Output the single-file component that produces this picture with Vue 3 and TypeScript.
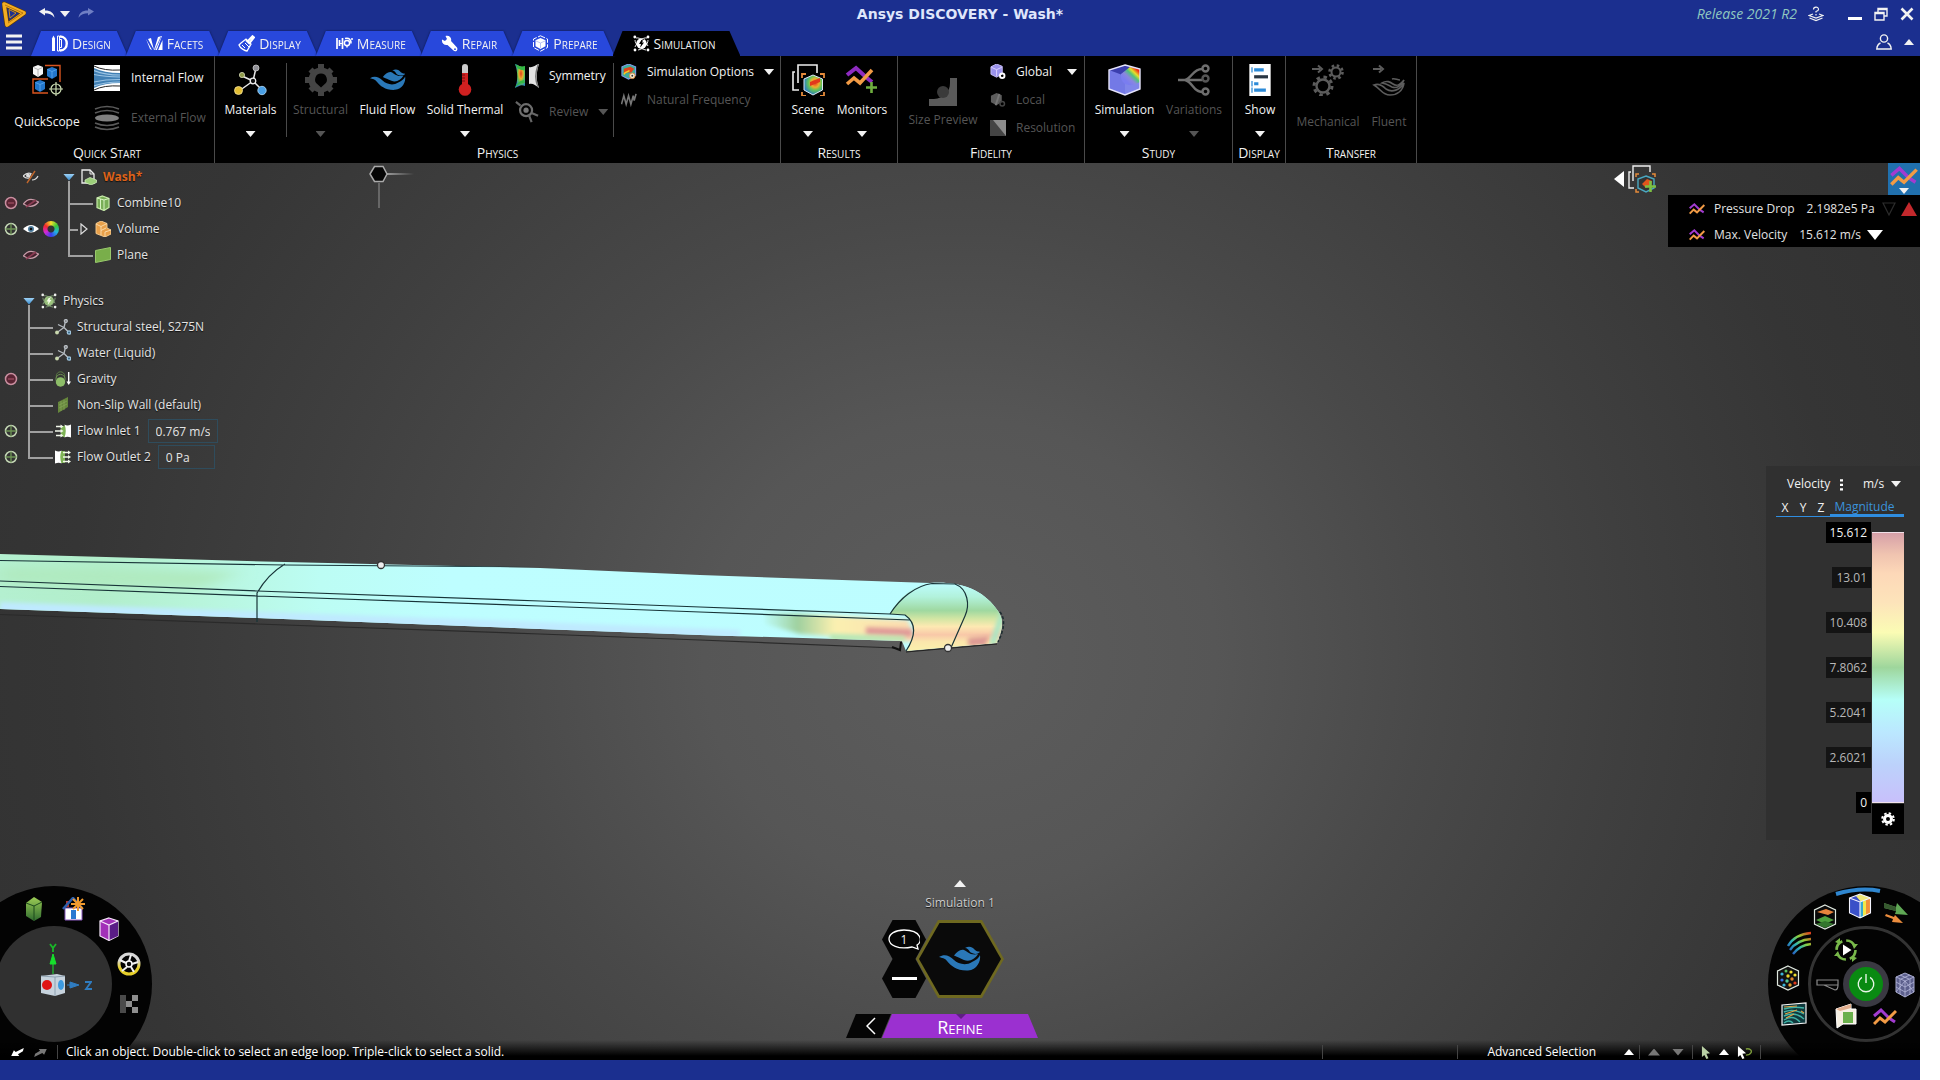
<script setup lang="ts">
import { ref } from 'vue'

interface Tab { id: string; label: string }
interface TreeRow { label: string; icon: string; pick?: string; eye?: string; wheel?: boolean; expand?: boolean; value?: string }
interface WheelTool { icon: string; label: string; x: number; y: number; w: number; h: number }

const tabs: Tab[] = [
  { id: 'design', label: 'Design' },
  { id: 'facets', label: 'Facets' },
  { id: 'brush', label: 'Display' },
  { id: 'measure', label: 'Measure' },
  { id: 'wrench', label: 'Repair' },
  { id: 'prepare', label: 'Prepare' },
  { id: 'atom', label: 'Simulation' },
]
const activeTab = ref('atom')

const bodies: TreeRow[] = [
  { label: 'Combine10', icon: 'solid', pick: 'pick-off', eye: 'eye-off' },
  { label: 'Volume', icon: 'volume', pick: 'pick-on', eye: 'eye-on', wheel: true, expand: true },
  { label: 'Plane', icon: 'plane', eye: 'eye-off' },
]

const physics = ref<TreeRow[]>([
  { label: 'Structural steel, S275N', icon: 'material-small' },
  { label: 'Water (Liquid)', icon: 'material-small' },
  { label: 'Gravity', icon: 'gravity', pick: 'pick-off' },
  { label: 'Non-Slip Wall (default)', icon: 'wall' },
  { label: 'Flow Inlet 1', icon: 'inlet', pick: 'pick-on', value: '0.767 m/s' },
  { label: 'Flow Outlet 2', icon: 'outlet', pick: 'pick-on', value: '0 Pa' },
])

const legend = [
  { value: '15.612', end: true },
  { value: '13.01', end: false },
  { value: '10.408', end: false },
  { value: '7.8062', end: false },
  { value: '5.2041', end: false },
  { value: '2.6021', end: false },
  { value: '0', end: true },
]

const viewTools: WheelTool[] = [
  { icon: 'box-green', label: 'View orientation', x: 78, y: 23, w: 20, h: 24 },
  { icon: 'house', label: 'Home view', x: 118, y: 23, w: 24, h: 24 },
  { icon: 'box-purple', label: 'Section view', x: 153, y: 43, w: 20, h: 24 },
  { icon: 'reel', label: 'Spin', x: 173, y: 78, w: 24, h: 24 },
  { icon: 'checker', label: 'Transparency', x: 173, y: 118, w: 20, h: 20 },
]

const resultTools: WheelTool[] = [
  { icon: 'slabs', label: 'Isosurface', x: 57, y: 31, w: 24, h: 26 },
  { icon: 'rainbow-box', label: 'Contour', x: 92, y: 20, w: 24, h: 26 },
  { icon: 'vectors', label: 'Vectors', x: 128, y: 26, w: 24, h: 24 },
  { icon: 'streams', label: 'Streamlines', x: 32, y: 57, w: 26, h: 24 },
  { icon: 'particles', label: 'Particles', x: 20, y: 92, w: 24, h: 26 },
  { icon: 'field', label: 'Direction field', x: 26, y: 128, w: 26, h: 24 },
  { icon: 'replay', label: 'Replay', x: 78, y: 64, w: 24, h: 24 },
  { icon: 'beam', label: 'Deformation', x: 60, y: 99, w: 24, h: 14 },
  { icon: 'mesh', label: 'Mesh', x: 137, y: 99, w: 20, h: 26 },
  { icon: 'cutplane', label: 'Cut plane', x: 78, y: 130, w: 22, h: 26 },
  { icon: 'monitor', label: 'Monitors', x: 117, y: 131, w: 24, h: 20 },
]

const unit = ref('m/s')
</script>

<template>
  <div class="app">
    <svg class="sprite" aria-hidden="true">
      <defs>
        <linearGradient id="g-rain" x1="0" y1="0" x2="1" y2="1">
          <stop offset="0" stop-color="#4a49d8" /><stop offset=".35" stop-color="#27c3a8" />
          <stop offset=".55" stop-color="#7fd63c" /><stop offset=".75" stop-color="#f3c623" /><stop offset="1" stop-color="#e8331c" />
        </linearGradient>
        <linearGradient id="g-face" x1="0" y1="1" x2="1" y2="0">
          <stop offset=".25" stop-color="#7a7df0" /><stop offset=".42" stop-color="#8a86e0" />
          <stop offset=".58" stop-color="#4fc37a" /><stop offset=".7" stop-color="#e6df2a" /><stop offset=".85" stop-color="#f02a1a" />
        </linearGradient>
        <linearGradient id="g-stream" x1="0" y1="1" x2="1" y2="0">
          <stop offset="0" stop-color="#2440c8" /><stop offset=".4" stop-color="#2fb4b4" />
          <stop offset=".65" stop-color="#8bd13a" /><stop offset="1" stop-color="#e23b1c" />
        </linearGradient>
        <radialGradient id="g-hot" cx=".6" cy=".4" r=".6">
          <stop offset="0" stop-color="#e3401f" /><stop offset=".35" stop-color="#efae2c" />
          <stop offset=".6" stop-color="#63c257" /><stop offset="1" stop-color="#2b7fc0" />
        </radialGradient>
        <linearGradient id="g-green" x1="0" y1="0" x2="0" y2="1"><stop offset="0" stop-color="#9ccc55" /><stop offset="1" stop-color="#2f6b2f" /></linearGradient>
        <linearGradient id="g-reel" x1="0" y1="0" x2="0" y2="1"><stop offset=".3" stop-color="#d8d8d8" /><stop offset=".7" stop-color="#e6cf2a" /></linearGradient>
      </defs>

      <symbol id="i-logo" viewBox="0 0 24 26">
        <path d="M2 3 22 12 5 24Z" fill="none" stroke="#5a3a08" stroke-width="5" stroke-linejoin="round" />
        <path d="M2 3 22 12 5 24Z" fill="none" stroke="#f3ad23" stroke-width="3.6" stroke-linejoin="round" />
        <path d="M3 4 21 12 6 22" fill="none" stroke="#a86a0c" stroke-width=".8" />
        <path d="M7 8.500 14 12 8 17Z" fill="#1b2f8f" stroke="#d08e17" stroke-width="1" />
      </symbol>
      <symbol id="i-undo" viewBox="0 0 16 10"><path d="M0 3.500 6 0v2.400c6 0 9 2.600 9.500 7.300C13 6.300 10 5.200 6 5.200V7.600Z" fill="currentColor" /></symbol>
      <symbol id="i-redo" viewBox="0 0 16 10"><path d="M16 3.500 10 0v2.400C4 2.400 1 5 .5 9.700 3 6.300 6 5.200 10 5.200V7.600Z" fill="currentColor" /></symbol>
      <symbol id="i-help" viewBox="0 0 16 16"><g fill="none" stroke="currentColor" stroke-width="1.200"><path d="M5 8 1 9.500 8 12l7-2.500L11 8M1.500 12 8 14.500 14.500 12M8 9.500V8M8 6.500V5.500C10 5 10.500 4.500 10.500 3.500 10.500 0 5.500.500 5.500 3.500" /></g></symbol>
      <symbol id="i-restore" viewBox="0 0 14 14"><path d="M1 5.500h9V13H1ZM4 5V1.500h9V9h-3M1 6.500h9M4 2.500h9" fill="none" stroke="currentColor" stroke-width="1.400" /></symbol>
      <symbol id="i-close" viewBox="0 0 14 14"><path d="M1.500 1.500l11 11m0-11-11 11" stroke="currentColor" stroke-width="2.600" /></symbol>
      <symbol id="i-user" viewBox="0 0 16 16"><circle cx="8" cy="4.500" r="3.600" fill="none" stroke="currentColor" stroke-width="1.400" /><path d="M4.500 9C2 10 1 12 .8 15h14.400C15 12 14 10 11.500 9" fill="none" stroke="currentColor" stroke-width="1.400" /></symbol>
      <symbol id="i-menu" viewBox="0 0 16 16"><path d="M0 2h16M0 8h16M0 14h16" stroke="currentColor" stroke-width="3" /></symbol>

      <symbol id="i-design" viewBox="0 0 17 17"><path d="M1 3.500 2.500.5 4 3.500V16H1Z" fill="#fff" /><path d="M6.500 1h2v15h-2z" fill="none" stroke="#fff" /><path d="M9 1.500c9 0 9 14 0 14" fill="none" stroke="#fff" stroke-width="2.400" /><path d="M8.500 4.500h2v8h-2" fill="none" stroke="#fff" /></symbol>
      <symbol id="i-facets" viewBox="0 0 17 17"><path d="M0 4 4 14 6 15Z M5 3 8 15 2 4Z M8 15 12 2 16 1 11 15Z M12 15 16.500 5V15Z" fill="#fff" /><path d="M9 15 15 2M11.500 15 16 3" stroke="#2848dc" stroke-width=".7" /></symbol>
      <symbol id="i-brush" viewBox="0 0 17 17"><path d="M3 8 8 4l5 5-4 7C7 16 2 13 1 10Z" fill="none" stroke="#fff" stroke-width="1.300" /><path d="M8 5 12 9M9.500 6.500 14.500 1.200 16 2.500 11.500 8" fill="none" stroke="#fff" stroke-width="2" /><path d="M4 10l3 3M7 8l4 4" stroke="#fff" /></symbol>
      <symbol id="i-measure" viewBox="0 0 17 17"><path d="M1 3v11M3.500 5v6M6.500 3v11" stroke="#fff" stroke-width="1.700" /><path d="M3.500 8.500h3" stroke="#fff" /><circle cx="11" cy="8" r="2.600" fill="none" stroke="#fff" stroke-width="1.500" /><path d="M9 3.500c4-1 6 1 6 5M11 12.500V10M16 3v2" stroke="#fff" stroke-width="1.500" fill="none" /></symbol>
      <symbol id="i-wrench" viewBox="0 0 17 17"><path d="M1 4.500 4 6l2-2L4.500 1c4-1 6.500 2 5.500 5l6 6.500c1.500 2.500-1.500 5-3.500 3L6.500 10C3 10.500.5 8 1 4.500Z" fill="#fff" /><circle cx="14" cy="14.200" r=".9" fill="#2848dc" /></symbol>
      <symbol id="i-prepare" viewBox="0 0 17 17"><path d="M8.500.8 15.500 4v8.500l-7 3.700-7-3.700V4Z" fill="none" stroke="#fff" stroke-width="1" stroke-dasharray="5 1.500" /><path d="M8.500 3 13.500 5.300v6L8.500 14l-5-2.700v-6Z" fill="#fff" /><path d="M4 6 8.500 8 13 6M8.500 8v5" stroke="#a9b6f2" stroke-width=".8" fill="none" /></symbol>
      <symbol id="i-atom" viewBox="0 0 17 17"><circle cx="8.500" cy="8.500" r="5.200" fill="#fff" /><path d="M9 4 6 9h2l-1 4 4-5.500H9L11 4Z" fill="#000" /><path d="M3 3c4-1 10 4 12 8M14 3C10 2 4 7 2 12M2 5c0 4 5 9 11 10M15 5c0 4-4 9-10 10" stroke="#fff" stroke-width=".9" fill="none" /><circle cx="1.800" cy="2" r="1.400" fill="#fff" /><circle cx="15" cy="2" r="1.400" fill="#fff" /><circle cx="2" cy="15" r="1.400" fill="#fff" /><circle cx="15" cy="15" r="1.400" fill="#fff" /></symbol>
      <symbol id="i-atom-green" viewBox="0 0 17 17"><circle cx="8.500" cy="8.500" r="5.200" fill="#9cc47c" /><path d="M9 4 6 9h2l-1 4 4-5.500H9L11 4Z" fill="#f4fbe9" /><path d="M3 3c4-1 10 4 12 8M14 3C10 2 4 7 2 12M2 5c0 4 5 9 11 10M15 5c0 4-4 9-10 10" stroke="#86a57a" stroke-width=".9" fill="none" /><circle cx="1.800" cy="2" r="1.400" fill="#eee" /><circle cx="15" cy="2" r="1.400" fill="#eee" /><circle cx="2" cy="15" r="1.400" fill="#eee" /><circle cx="15" cy="15" r="1.400" fill="#eee" /></symbol>

      <symbol id="i-quickscope" viewBox="0 0 32 32">
        <path d="M14 1.500h15V18M17 15H2v14h15" fill="none" stroke="#d9541f" stroke-width="1.400" />
        <path d="M7 1 12 3v7l-5 3-5-3V3Z" fill="#f6f6f6" /><path d="M2.500 3.500 7 5.500l4.500-2M7 5.500V12" stroke="#999" fill="none" stroke-width=".7" />
        <path d="M21 3 26 5v7l-5 3-5-3V5Z" fill="#2377cc" /><path d="M16.500 5.500 21 7.500l4.500-2M21 7.500V14" stroke="#5dabf0" fill="none" stroke-width=".8" />
        <path d="M9 16 14 18v7l-5 3-5-3v-7Z" fill="#2377cc" /><path d="M4.500 18.500 9 20.500l4.500-2M9 20.500V27" stroke="#5dabf0" fill="none" stroke-width=".8" />
        <circle cx="25" cy="25" r="5" fill="none" stroke="#cfe0b5" stroke-width="1.200" /><path d="M25 18v14M18 25h14" stroke="#cfe0b5" stroke-width="1.200" />
      </symbol>
      <symbol id="i-internal" viewBox="0 0 26 26"><path d="M0 0h26v26H0z" fill="#fff" /><path d="M0 3Q10 8 26 8v10Q10 18 0 23Z" fill="#4180b4" /><path d="M0 5.500Q11 10 26 10M0 9.500Q11 12 26 12M0 17Q11 14.500 26 14.500M0 21Q11 17 26 17" stroke="#9cc4e4" stroke-width="1.200" fill="none" /><path d="M0 1Q10 6 26 5M0 25Q10 20 26 21" stroke="#222" stroke-width="1" fill="none" /></symbol>
      <symbol id="i-external" viewBox="0 0 26 26"><ellipse cx="13" cy="13" rx="12" ry="3.600" fill="#808080" /><path d="M1 4Q13-1 25 4M1 8Q13 3 25 8M1 18Q13 23 25 18M1 22Q13 27 25 22" fill="none" stroke="#5a5a5a" stroke-width="1.600" /></symbol>
      <symbol id="i-materials" viewBox="0 0 34 32"><g stroke="#e8e8e8" stroke-width="1.500"><path d="M19 17 5 27M19 17 29 27M19 17 22 4M19 17 8 12" /></g><circle cx="22" cy="4" r="3" fill="#8f8f96" stroke="#ccc" stroke-width=".8" /><circle cx="8" cy="11" r="2.600" fill="#8e9a4a" stroke="#d8dcb8" stroke-width=".8" /><circle cx="19" cy="17" r="2.800" fill="#111" stroke="#eee" stroke-width="1.300" /><circle cx="4.500" cy="26.500" r="4" fill="#e2bd33" stroke="#f6e6a0" stroke-width=".8" /><circle cx="28" cy="26.500" r="4.200" fill="#4aa0e6" stroke="#b4daf8" stroke-width=".8" /></symbol>
      <symbol id="i-gear" viewBox="0 0 32 32"><path d="M13 0h6v5h-6zM13 27h6v5h-6zM0 13h5v6H0zM27 13h5v6h-5zM3.500 7.500 7.500 3.500 11 7 7 11ZM28.500 7.500 24.500 3.500 21 7 25 11ZM3.500 24.500 7.500 28.500 11 25 7 21ZM28.500 24.500 24.500 28.500 21 25 25 21Z" fill="#444" /><path d="M16 3.500a12.500 12.500 0 1 0 0 25 12.500 12.500 0 0 0 0-25Zm0 6a6 6 0 0 1 3.500 10.800L16 23.500l-3.500-3.200A6 6 0 0 1 16 9.500Z" fill="#444" fill-rule="evenodd" /></symbol>
      <symbol id="i-fluid" viewBox="0 0 42 26"><path d="M0 11C5 8 10 9 15 14 19 18 27 20 33 16 37 14 40 12 41 9 42 15 38 24 29 24.500 18 25 12 20 8 15 6 12 3 12 0 11Z" fill="#2a78b8" /><path d="M15 9.500C18 6 21 3 25 4 28 5 31 10 39 8 36 13 31 16 25 14 21 12 18 11 15 9.500Z" fill="#2a78b8" /><path d="M26 2C30-.5 34 1 36 4 38 6 40 5 41 6 38 9 34 8 31 6 30 4 28 2 26 2Z" fill="#2a78b8" /></symbol>
      <symbol id="i-thermo" viewBox="0 0 14 32"><rect x="4" y="0" width="6" height="24" rx="3" fill="#ccc" /><path d="M4 9h6v13H4z" fill="#cf2020" /><circle cx="7" cy="25.500" r="6.300" fill="#cf2020" /><path d="M4 11h3M4 14h3M4 17h3" stroke="#701010" /></symbol>
      <symbol id="i-symmetry" viewBox="0 0 24 24"><path d="M0 0C4 1 6 4 10 3V22C6 20 4 22 0 24 3 17 3 8 0 0Z" fill="url(#g-hot)" /><path d="M0 0c3 2 6 3 10 2v4C6 7 2 5 0 0ZM0 24c3-4 6-5 10-5l-1-3c-5 1-8 4-9 8Z" fill="#35b845" /><path d="M24 0c-4 1-6 4-10 3V20c4-1 6 1 10 4-3-7-3-16 0-24Z" fill="#e4e4e4" /><path d="M23 1c-3 9-3 14 0 22" stroke="#777" stroke-width="1.400" fill="none" /></symbol>
      <symbol id="i-review" viewBox="0 0 26 24"><circle cx="12" cy="10" r="6.500" fill="none" stroke="#6e6e6e" stroke-width="2.400" /><circle cx="12" cy="10" r="2.800" fill="#777" /><path d="M15 15 18 23M1 1l5 4M18 13l7 3" stroke="#666" stroke-width="2.400" /></symbol>
      <symbol id="i-options" viewBox="0 0 17 17"><path d="M8 0 15.500 3v9L8 16 1 12.500V3Z" fill="#3fae98" stroke="#7f9be8" stroke-width="1.200" /><path d="M3 5 10 3l4 2-3 4H7l-4 2Z" fill="#e2421c" /><path d="M3 11c2-4 4-2 6-4" stroke="#f2cf28" fill="none" stroke-width="1.600" /><circle cx="12" cy="12.500" r="3" fill="#f4ead2" stroke="#d88a3a" /><circle cx="12" cy="12.500" r="1" fill="#333" /></symbol>
      <symbol id="i-freq" viewBox="0 0 17 17"><path d="M.5 13 3 4l2.500 9L8 4l2.500 9L13 4l1 5 2-7" fill="none" stroke="#777" stroke-width="1.700" /></symbol>
      <symbol id="i-scene" viewBox="0 0 32 32"><path d="M3 8H1v18h6M6 19V1h19v8" fill="none" stroke="#eee" stroke-width="1.600" /><path d="M21 11 30.500 15v11L21 31l-9-5V15Z" fill="url(#g-hot)" stroke="#dfe9f6" stroke-width="1" /><path d="M18 18 28 14v4l-10 4Z" fill="#e2381c" /><path d="M10 14v-4h4M28 10h4v4M10 28v4h4M28 32h4v-4" fill="none" stroke="#e58b3a" stroke-width="1.800" /></symbol>
      <symbol id="i-scene-add" viewBox="0 0 28 28"><path d="M3 7H1v16h5M5 16V1h17v6" fill="none" stroke="#eee" stroke-width="1.400" /><path d="M18 11 26 14v9l-8 4-8-4v-9Z" fill="#333" stroke="#4aa7c0" stroke-width="1.400" /><path d="M14 19 19 14l5 2-1 4-5 3Z" fill="#e2551c" /><path d="M8 12V9h3M24 9h3v3M8 24v3h3" fill="none" stroke="#e58b3a" stroke-width="1.500" /><path d="M22.500 16v11M17 21.500h11" stroke="#7cc043" stroke-width="2.600" /></symbol>
      <symbol id="i-monitors" viewBox="0 0 32 32"><path d="M1 11 10 4 21 14l5 4" fill="none" stroke="#8e2bc0" stroke-width="4" /><path d="M1 20 8 14l6 5L26 6" fill="none" stroke="#f29b45" stroke-width="3.600" /><path d="M25.500 18v11M20 23.500h11" stroke="#6fae3f" stroke-width="2.600" /></symbol>
      <symbol id="i-monitor" viewBox="0 0 24 20"><path d="M1 9 8 3l8 8 6 4" fill="none" stroke="#a23bd0" stroke-width="3" /><path d="M1 17 7 11l5 4L23 4" fill="none" stroke="#f29b45" stroke-width="3" /></symbol>
      <symbol id="i-sizepreview" viewBox="0 0 28 28"><path d="M21 0h7v28H0v-7h5C15 20 21 14 21 5Z" fill="#5a5a5a" /><circle cx="14" cy="14" r="6" fill="#3a3a3a" /></symbol>
      <symbol id="i-global" viewBox="0 0 17 17"><path d="M7 0 13 2.500v8L7 14 1 11V3Z" fill="#9a92ec" stroke="#c9c0f6" /><path d="M1.500 3.500 7 6l5.500-2.500M7 6v7" stroke="#ddd2ff" fill="none" /><circle cx="13" cy="12.500" r="2.400" fill="none" stroke="#fff" stroke-width="2" /></symbol>
      <symbol id="i-local" viewBox="0 0 17 17"><path d="M7 1 12.500 3.500v7L7 14 1 11V4Z" fill="#5d5d5d" /><path d="M10 2 6 14" stroke="#777" stroke-width="2" /><circle cx="13" cy="12.500" r="2.400" fill="none" stroke="#444" stroke-width="1.600" /></symbol>
      <symbol id="i-resolution" viewBox="0 0 16 16"><path d="M0 0h16v16H0z" fill="#444" /><path d="M3 0h13v16Z" fill="#8c8c8c" /></symbol>
      <symbol id="i-simulation" viewBox="0 0 34 32"><path d="M17 1 32 5v20L17 31 1 25V6Z" fill="#7379e6" /><path d="M17 12 32 6v19L17 31Z" fill="#8086ea" /><path d="M1 6 17 1 32 5 17 12Z" fill="#3b3fae" /><path d="M13 10 22 3 32 5V18Q24 23 17 20Q12 16 13 10Z" fill="url(#g-face)" /><path d="M17 1 32 5v20L17 31 1 25V6Z" fill="none" stroke="#e6e4fb" stroke-width="1.400" /></symbol>
      <symbol id="i-variations" viewBox="0 0 32 32"><g fill="none" stroke="#6e6e6e" stroke-width="2.400"><path d="M0 16h24M7 16C14 14 15 5 24 5M7 16c8 2 8 12 17 12" /><circle cx="27.500" cy="4.500" r="3" /><circle cx="27.500" cy="14.500" r="3" stroke="#555" /><circle cx="27.500" cy="27.500" r="3" /></g></symbol>
      <symbol id="i-show" viewBox="0 0 20 30"><path d="M0 0h20v30H0z" fill="#fff" /><path d="M2.500 3v5M2.500 16v5M2.500 22v5" stroke="#2d8bd8" stroke-width="1.200" /><path d="M4.500 5.500h9M4.500 18.500h4M4.500 24.500h11" stroke="#2d8bd8" stroke-width="3" /><path d="M4.500 12h13" stroke="#2a3642" stroke-width="3" /></symbol>
      <symbol id="i-mechanical" viewBox="0 0 32 32"><g fill="none" stroke="#5c5c5c"><path d="M0 5h8M6 1.500 10 5 6 8.500" stroke-width="2" /><circle cx="11" cy="22" r="6.500" stroke-width="2.400" /><circle cx="11" cy="22" r="9" stroke-width="3" stroke-dasharray="3.500 3.600" /><circle cx="24" cy="8" r="4.500" stroke-width="2" /><circle cx="24" cy="8" r="6.500" stroke-width="2.600" stroke-dasharray="2.500 2.600" /></g></symbol>
      <symbol id="i-fluent" viewBox="0 0 32 32"><g fill="none" stroke="#5c5c5c" stroke-width="1.600"><path d="M0 5h8M6 1.500 10 5 6 8.500" stroke-width="2" /><path d="M1 21c5-2 9 1 12 4 6 4 14 1 18-6-1 8-7 12-14 12C9 31 8 25 1 21ZM9 19c5-3 8-1 11 1 4 3 8 0 11-4-2 5-7 9-12 7-4-2-5-3-10-4ZM19 15c3-1 5 1 8 1" /></g></symbol>

      <symbol id="i-doc" viewBox="0 0 16 16"><path d="M1 1h8l4 4v9H1Z" fill="#3b3b3b" stroke="#eee" stroke-width="1.300" /><path d="M9 1v4h4" fill="none" stroke="#eee" /><path d="M4 11 9 8.500 15.500 11v2.500L10 16l-6-2.500Z" fill="#9ccf7a" stroke="#d5f0c3" stroke-width=".7" /></symbol>
      <symbol id="i-solid" viewBox="0 0 16 16"><path d="M7.500 1 14 3.500v9L9 15.500 2 12.500V3Z" fill="#79ad57" stroke="#c7eba9" stroke-width="1.200" /><path d="M2 3 9 5l5-1.500M9 5v10M5.500 4v10" stroke="#d7f3c2" fill="none" /></symbol>
      <symbol id="i-volume" viewBox="0 0 16 16"><path d="M6 0 12 2.500V7l4 2v4l-6 3-9-3.500V2.500Z" fill="#e8a04a" stroke="#f8cf94" stroke-width=".9" /><path d="M1 3l5 2.500 6-3M6 5.500V14M6 9.500l5-2.500M10 11l6-2M10 11v5" stroke="#fbdcae" fill="none" stroke-width=".9" /></symbol>
      <symbol id="i-plane" viewBox="0 0 16 16"><path d="M.5 3.500 15.500.5v12L.5 15.500Z" fill="#79ae4a" stroke="#98c86c" /></symbol>
      <symbol id="i-material-small" viewBox="0 0 16 16"><g stroke="#b6bcc2" stroke-width="1.300" fill="none"><path d="M9 8.500 2 13.500M9 8.500l5 5M9 8.500 10.500 2M9 8.500 3 5.500" /><circle cx="10.800" cy="2" r="1.500" fill="#777" /><circle cx="14" cy="13.500" r="1.700" fill="#3d6c8c" stroke="#9fc4dc" /></g><circle cx="2" cy="13.500" r="1.900" fill="#c9d8ae" /></symbol>
      <symbol id="i-gravity" viewBox="0 0 16 16"><circle cx="5.500" cy="5" r="4.200" fill="none" stroke="#5a7a44" /><circle cx="5.500" cy="8" r="4.600" fill="none" stroke="#6d8f52" /><circle cx="5.500" cy="11" r="4.700" fill="#8dbd68" /><path d="M13.700 1v11" stroke="#fff" stroke-width="1.400" /><path d="M11.500 10.500h4.500L13.700 14Z" fill="#fff" /></symbol>
      <symbol id="i-wall" viewBox="0 0 16 16"><path d="M3 5 13 0v10L3 16Z" fill="#66863c" /><path d="M4 8l8-4M4 11l8-4M6 4v10M9 3v10" stroke="#86a85a" stroke-width=".7" /></symbol>
      <symbol id="i-inlet" viewBox="0 0 16 16"><path d="M6 4l5-2v12H8L6 12Z" fill="#7fb356" /><path d="M9.500 1.500Q12 3.500 16 1.500v13Q12 13 9.500 14.500 12 8 9.500 1.500Z" fill="#fff" /><path d="M1 3.500h6M0 8h7M1 12.500h6" stroke="#f1f8ea" stroke-width="1.300" /><path d="M5.500 1.500 8.500 3.500l-3 2ZM5.500 6 8.500 8l-3 2ZM5.500 10.500l3 2-3 2Z" fill="#f1f8ea" /></symbol>
      <symbol id="i-outlet" viewBox="0 0 16 16"><path d="M5 2h5v12H5Z" fill="#7fb356" /><path d="M0 1.500Q4 3.500 6.500 1.500 4 8 6.500 14.500 4 13 0 14.500Z" fill="#fff" /><path d="M8 3.500h6M8 8h6M8 12.500h6" stroke="#f1f8ea" stroke-width="1.300" /><path d="M13 1.500 16 3.500l-3 2ZM13 6 16 8l-3 2ZM13 10.500l3 2-3 2Z" fill="#f1f8ea" /></symbol>
      <symbol id="i-pick-on" viewBox="0 0 16 16"><circle cx="8" cy="8" r="5.500" fill="none" stroke="#c5d8b6" stroke-width="1.500" /><path d="M8 2.500v11M2.500 8h11" stroke="#6d9455" stroke-width="1.300" /></symbol>
      <symbol id="i-pick-off" viewBox="0 0 16 16"><circle cx="8" cy="8" r="5.500" fill="#5a2433" stroke="#c98fa0" stroke-width="1.500" /><path d="M5 8h6" stroke="#b0596f" stroke-width="1" /></symbol>
      <symbol id="i-eye-on" viewBox="0 0 16 16"><path d="M0 8Q8 0 16 8 8 15 0 8Z" fill="#fff" /><circle cx="8" cy="8" r="3" fill="#4b7b9c" /><circle cx="8" cy="8" r="1.300" fill="#111" /></symbol>
      <symbol id="i-eye-off" viewBox="0 0 16 16"><path d="M.5 9Q6 1 15.500 7 9 14.500 .5 9Z" fill="#43222c" stroke="#c99daa" stroke-width="1.300" /><path d="M3 12 13 5" stroke="#8c3d54" stroke-width="1.600" /></symbol>
      <symbol id="i-eye-mix" viewBox="0 0 16 16"><path d="M0 7Q4 3 8 4.500L6 9Q3 10 0 7ZM9 11q4 0 6-4" fill="none" stroke="#ddd" stroke-width="1.200" /><circle cx="5" cy="6.500" r="2" fill="#ddd" /><path d="M4 14 12 2" stroke="#c2672c" stroke-width="1.400" /></symbol>

      <symbol id="i-box-green" viewBox="0 0 20 24"><path d="M10 0 18 5 17 20 10 24 2 19 2 6Z" fill="url(#g-green)" /><path d="M2 6 10 9 18 5M10 9v14" stroke="#1d4a1d" fill="none" /></symbol>
      <symbol id="i-house" viewBox="0 0 24 24"><path d="M3 11h17v12H3z" fill="#fff" stroke="#8a5ac0" /><path d="M4 4h3v6H4z" fill="#b8342a" /><path d="M1 12 11 1l9 10" fill="none" stroke="#2d5fae" stroke-width="2.600" /><path d="M9 13h5v9H9z" fill="#2b78d0" /><path d="M16 0v14M9 7h14M11 2l10 10M21 2 11 12" stroke="#f29b2e" stroke-width="2" /></symbol>
      <symbol id="i-box-purple" viewBox="0 0 20 24"><path d="M10 1 19 4V19L10 23.500 1 19V4Z" fill="#a230b8" stroke="#f6e6fa" stroke-width="1.200" /><path d="M10 8 19 4V19L10 23Z" fill="#5a1c86" /><path d="M1 4 10 8 19 4M10 8v15" fill="none" stroke="#f6e6fa" stroke-width="1.200" /></symbol>
      <symbol id="i-reel" viewBox="0 0 24 24"><circle cx="12" cy="12" r="10" fill="none" stroke="url(#g-reel)" stroke-width="3" /><circle cx="12" cy="12" r="3" fill="#111" stroke="#fff" stroke-width="1.500" /><path d="M12 9 14 3M15 12l6-2M14 15l3 5M10 15l-5 4M9 11 3 8" stroke="#f2f2f2" stroke-width="2" /></symbol>
      <symbol id="i-checker" viewBox="0 0 20 20"><path d="M1 1h6v18H1z" fill="#4a4a4a" /><path d="M13 1h6v6h-6zM7 7h6v6H7zM13 13h6v6h-6z" fill="#8e8e8e" /></symbol>
      <symbol id="i-slabs" viewBox="0 0 24 26"><path d="M12 1 22.500 6v14L12 25 1.500 20V6Z" fill="#0a0a0a" stroke="#dfe8df" stroke-width="1.200" /><path d="M4 8 13 5l8 3-6 3Z" fill="#e8843c" /><path d="M3 16 12 12l9 4-9 4Z" fill="#4fa03e" /><path d="M3 20 12 17l9 3-9 4Z" fill="#33762d" /></symbol>
      <symbol id="i-rainbow-box" viewBox="0 0 24 26"><path d="M1.500 5 12 1l10.500 4v15L12 25 1.500 20Z" fill="#3a50c8" /><path d="M8 3 12 1l10.500 4L13 9Z" fill="#f0e878" /><path d="M12 9v16l3-1V8Z" fill="#38a9d0" /><path d="M15 8v16l3-2V7Z" fill="#f2e84a" /><path d="M18 7v15l4.500-2V5Z" fill="#f29038" /><path d="M1.500 5 12 1l10.500 4v15L12 25 1.500 20ZM1.500 5 12 9l10.500-4M12 9v16" fill="none" stroke="#f4f4ff" stroke-width="1.100" /></symbol>
      <symbol id="i-vectors" viewBox="0 0 24 24"><path d="M0 3 12 7l1-4 11 12-13-1 1-3L0 8Z" fill="#5fa855" /><path d="M0 3 12 7v4L0 8Z" fill="#36592f" /><path d="M2 14 10 17l1-2 8 8-11-1 1-3-8-3Z" fill="#ec8d3e" /></symbol>
      <symbol id="i-streams" viewBox="0 0 26 24"><path d="M1 15Q8 3 24 2M3 19Q10 9 24 8M6 23Q13 14 24 13" fill="none" stroke="url(#g-stream)" stroke-width="2.400" /></symbol>
      <symbol id="i-particles" viewBox="0 0 24 26"><path d="M12 1 22.500 6v14L12 25 1.500 20V6Z" fill="#111" stroke="#dfe8df" stroke-width="1.200" /><g><circle cx="6" cy="9" r="1.600" fill="#3bb4d8" /><circle cx="10" cy="6" r="1.500" fill="#58c060" /><circle cx="15" cy="7" r="1.600" fill="#f0e030" /><circle cx="19" cy="10" r="1.600" fill="#f0e030" /><circle cx="12" cy="11" r="1.700" fill="#e8d22a" /><circle cx="6" cy="15" r="1.600" fill="#3b74e8" /><circle cx="11" cy="16" r="1.700" fill="#52c89a" /><circle cx="16" cy="14" r="1.700" fill="#e6862a" /><circle cx="19" cy="18" r="1.600" fill="#e23a1c" /><circle cx="14" cy="20" r="1.700" fill="#e6a02a" /><circle cx="8" cy="20" r="1.600" fill="#3bb4d8" /></g></symbol>
      <symbol id="i-field" viewBox="0 0 26 24"><path d="M1 3 25 1v20L1 23Z" fill="#10383c" stroke="#f4f4f4" stroke-width="1.200" /><path d="M3 7Q12 4 23 6M3 10Q12 6 23 12M3 14Q14 9 23 17M3 18Q12 12 19 20M3 21Q8 17 12 21" fill="none" stroke="#3fb3a6" stroke-width="1.400" /><path d="M3 5 16 4M4 12l12-4M5 16l8-4M20 9l3 2" stroke="#e0a446" stroke-width="1.200" /></symbol>
      <symbol id="i-replay" viewBox="0 0 24 24"><circle cx="12" cy="12" r="9.500" fill="none" stroke="#78b84a" stroke-width="2.600" stroke-dasharray="10.900 4" /><path d="M6 0v6L1 4ZM24 6h-6l2 5ZM18 24v-6l5 2ZM0 18h6l-2-5Z" fill="#78b84a" /><path d="M9 6.500 17.500 12 9 17.500Z" fill="#fff" /></symbol>
      <symbol id="i-beam" viewBox="0 0 24 14"><path d="M1 2h21v5H1ZM22 7c0 3-1 5-3 5L8 7" fill="none" stroke="#8a8a8a" stroke-width="1.200" /></symbol>
      <symbol id="i-mesh" viewBox="0 0 20 26"><path d="M10 1 19 5v15l-9 5-9-5V5Z" fill="#5c5f8c" stroke="#a9acd0" /><path d="M1 5 10 9l9-4M10 9v16M1 10l9 5 9-5M1 15l9 5 9-5M5 7v15M15 7v15M1 20 10 9 19 20M5 3l9 4M15 3 6 7" stroke="#b5b8da" stroke-width=".8" fill="none" /></symbol>
      <symbol id="i-cutplane" viewBox="0 0 22 26"><path d="M1 6 16 1v5h5v15H8L2 25Z" fill="#f6efe2" stroke="#fff" /><path d="M1 6 16 1v4L5 8Z" fill="#e2ae8e" /><path d="M8 9h10v11H8z" fill="#6bb04c" /></symbol>
      <symbol id="i-cursor" viewBox="0 0 12 16"><path d="M1 0 11 9 6.500 9.500 9 15 6.500 16 4 11 1 13.500Z" fill="currentColor" /></symbol>
      <symbol id="i-arrow-sw" viewBox="0 0 14 10"><path d="M0 9 3 2.500 5 4.500 14 0 13 3.500 7.500 7 9 9Z" fill="currentColor" /></symbol>
    </svg>

    <header class="titlebar">
      <div class="quick">
        <svg class="logo"><use href="#i-logo" /></svg>
        <button class="plain" aria-label="Undo"><svg class="undo"><use href="#i-undo" /></svg></button>
        <button class="plain" aria-label="Undo history"><i class="caret" /></button>
        <button class="plain faded" aria-label="Redo"><svg class="undo"><use href="#i-redo" /></svg></button>
      </div>
      <h1>Ansys DISCOVERY - Wash*</h1>
      <div class="window">
        <em>Release 2021 R2</em>
        <button class="plain help" aria-label="Help"><svg class="s16"><use href="#i-help" /></svg></button>
        <button class="plain" aria-label="Minimize"><i class="minus" /></button>
        <button class="plain" aria-label="Restore"><svg class="s14"><use href="#i-restore" /></svg></button>
        <button class="plain" aria-label="Close"><svg class="s14"><use href="#i-close" /></svg></button>
      </div>
    </header>

    <nav class="tabbar">
      <button class="plain menu" aria-label="Menu"><svg class="s16"><use href="#i-menu" /></svg></button>
      <button v-for="t in tabs" :key="t.id" class="plain tab" :class="{ active: t.id === activeTab }" @click="activeTab = t.id">
        <span class="shape"><svg class="s17"><use :href="'#i-' + t.id" /></svg>{{ t.label }}</span>
      </button>
      <div class="account">
        <button class="plain" aria-label="Account"><svg class="s16"><use href="#i-user" /></svg></button>
        <button class="plain" aria-label="Collapse ribbon"><i class="caret up" /></button>
      </div>
    </nav>

    <div class="ribbon">
      <section class="group w-quick">
        <div class="tools">
          <button class="plain big low c-94"><svg class="s32"><use href="#i-quickscope" /></svg><span>QuickScope</span></button>
          <div class="stack tall">
            <button class="plain line wide"><svg class="s26"><use href="#i-internal" /></svg>Internal Flow</button>
            <button class="plain line wide" disabled><svg class="s26"><use href="#i-external" /></svg>External Flow</button>
          </div>
        </div>
        <h2>Quick Start</h2>
      </section>

      <section class="group w-physics">
        <div class="tools">
          <button class="plain big c-71"><svg class="s32"><use href="#i-materials" /></svg><span>Materials</span><i class="caret" /></button>
          <i class="rule" />
          <button class="plain big c-67" disabled><svg class="s32"><use href="#i-gear" /></svg><span>Structural</span><i class="caret" /></button>
          <button class="plain big c-67"><svg class="s32"><use href="#i-fluid" /></svg><span>Fluid Flow</span><i class="caret" /></button>
          <button class="plain big c-88"><svg class="s32"><use href="#i-thermo" /></svg><span>Solid Thermal</span><i class="caret" /></button>
          <div class="stack tall c-104">
            <button class="plain line"><svg class="s24"><use href="#i-symmetry" /></svg>Symmetry</button>
            <button class="plain line" disabled><svg class="s24"><use href="#i-review" /></svg>Review<i class="caret" /></button>
          </div>
          <i class="rule" />
          <div class="stack">
            <button class="plain line"><svg class="s16"><use href="#i-options" /></svg>Simulation Options<i class="caret" /></button>
            <button class="plain line" disabled><svg class="s16"><use href="#i-freq" /></svg>Natural Frequency</button>
          </div>
        </div>
        <h2>Physics</h2>
      </section>

      <section class="group w-results">
        <div class="tools">
          <button class="plain big c-54"><svg class="s32"><use href="#i-scene" /></svg><span>Scene</span><i class="caret" /></button>
          <button class="plain big c-54"><svg class="s32"><use href="#i-monitors" /></svg><span>Monitors</span><i class="caret" /></button>
        </div>
        <h2>Results</h2>
      </section>

      <section class="group w-fidelity">
        <div class="tools">
          <button class="plain big mid c-90" disabled><svg class="s28"><use href="#i-sizepreview" /></svg><span>Size Preview</span></button>
          <div class="stack snug">
            <button class="plain line"><svg class="s16"><use href="#i-global" /></svg>Global<i class="caret far" /></button>
            <button class="plain line" disabled><svg class="s16"><use href="#i-local" /></svg>Local</button>
            <button class="plain line" disabled><svg class="s16"><use href="#i-resolution" /></svg>Resolution</button>
          </div>
        </div>
        <h2>Fidelity</h2>
      </section>

      <section class="group w-study">
        <div class="tools">
          <button class="plain big c-79"><svg class="s32"><use href="#i-simulation" /></svg><span>Simulation</span><i class="caret" /></button>
          <button class="plain big c-60" disabled><svg class="s32"><use href="#i-variations" /></svg><span>Variations</span><i class="caret" /></button>
        </div>
        <h2>Study</h2>
      </section>

      <section class="group w-display">
        <div class="tools">
          <button class="plain big c-54"><svg class="s32"><use href="#i-show" /></svg><span>Show</span><i class="caret" /></button>
        </div>
        <h2>Display</h2>
      </section>

      <section class="group w-transfer">
        <div class="tools">
          <button class="plain big low c-84" disabled><svg class="s32"><use href="#i-mechanical" /></svg><span>Mechanical</span></button>
          <button class="plain big low c-38" disabled><svg class="s32"><use href="#i-fluent" /></svg><span>Fluent</span></button>
        </div>
        <h2>Transfer</h2>
      </section>
    </div>

    <main class="viewport">
      <svg class="scene" viewBox="0 163 1920 897" preserveAspectRatio="xMinYMin meet" role="img" aria-label="Flow volume coloured by velocity">
        <defs>
          <linearGradient id="pipe" gradientUnits="userSpaceOnUse" x1="0" y1="0" x2="1003" y2="0">
            <stop offset="0" stop-color="#b4f0d0" /><stop offset=".1" stop-color="#b2eecb" /><stop offset=".2" stop-color="#b8f5dc" />
            <stop offset=".32" stop-color="#bcfdf4" /><stop offset=".45" stop-color="#befeff" /><stop offset="1" stop-color="#bdfdff" />
          </linearGradient>
          <linearGradient id="head" gradientUnits="userSpaceOnUse" x1="0" y1="583" x2="0" y2="652">
            <stop offset="0" stop-color="#bdfdff" /><stop offset=".2" stop-color="#b2f2dc" /><stop offset=".4" stop-color="#9fd8a0" />
            <stop offset=".52" stop-color="#d3e6a4" /><stop offset=".63" stop-color="#fde9b2" /><stop offset=".75" stop-color="#f8c8a8" /><stop offset=".85" stop-color="#fbe6ac" /><stop offset="1" stop-color="#fbf2ac" />
          </linearGradient>
          <linearGradient id="jet" gradientUnits="userSpaceOnUse" x1="760" y1="0" x2="910" y2="0">
            <stop offset="0" stop-color="#a8dca8" stop-opacity="0" /><stop offset=".25" stop-color="#9fd09f" />
            <stop offset=".5" stop-color="#fbf0b0" /><stop offset="1" stop-color="#fbdcb0" />
          </linearGradient>
          <linearGradient id="fade" gradientUnits="userSpaceOnUse" x1="280" y1="0" x2="540" y2="0"><stop offset="0" stop-color="#173438" /><stop offset=".7" stop-color="#173438" /><stop offset="1" stop-color="#173438" stop-opacity="0" /></linearGradient>
          <linearGradient id="ax-x" x1="0" x2="1"><stop offset="0" stop-color="#9a9a9a" /><stop offset="1" stop-color="#9a9a9a" stop-opacity="0" /></linearGradient>
          <filter id="soft" x="-20%" y="-50%" width="140%" height="200%"><feGaussianBlur stdDeviation="2" /></filter>
          <filter id="haze" x="-20%" y="-80%" width="140%" height="260%"><feGaussianBlur stdDeviation="10 5" /></filter>
          <clipPath id="body"><path d="M0 554 285 562 540 568 700 575 930 583C965 581 985 592 998 611 1004 620 1003 628 997 643L906 651 902 641 700 635 540 629 257 618 0 609Z" /></clipPath>
        </defs>
        <g clip-path="url(#body)">
          <path d="M0 540h1010v120H0z" fill="url(#pipe)" />
          <path d="M0 567 240 572 200 588 0 582Z" fill="#b0eac0" filter="url(#haze)" />
          <path d="M0 602 540 622 740 630V640L0 618Z" fill="#bfeaff" filter="url(#soft)" />
          <path d="M765 612 908 620 916 642 800 634 765 624Z" fill="url(#jet)" filter="url(#soft)" />
          <path d="M866 627 912 629V637L866 635Z" fill="#e09a98" filter="url(#soft)" />
          <path d="M890 614C900 596 915 584 932 582H1010V655H905C916 636 916 622 905 615Z" fill="url(#head)" />
          <path d="M968 638 990 636 985 646 968 646Z" fill="#dd9a94" filter="url(#soft)" />
          <path d="M1004 610 992 645" stroke="#a8e6c4" stroke-width="6" filter="url(#soft)" />
          <path d="M830 634 905 636V641H830Z" fill="#b8e6b0" filter="url(#soft)" />
        </g>
        <g fill="none" stroke="#183438" stroke-width="1.200">
          <path d="M0 560.500 285 565M0 581 257 591 540 601 700 607 890 614 905 615C915 622 917 634 906 651M0 586.500 257 596 540 606 700 612 910 620M257 622V593Q268 574 285 564" />
          <path d="M285 565 540 567" stroke="url(#fade)" />
          <path d="M890 614C900 598 915 586 932 583.500L955 584C968 589 970 605 965 616L950 650" />
          <path d="M906 652 997 644" stroke="#222" />
          <path d="M1000 612Q1008 622 998 642" stroke="#1c2c30" stroke-width="1.500" stroke-dasharray="3 2" />
          <path d="M0 614.500 257 624 540 634 700 640 895 648" stroke="#2a2a2a" />
          <path d="M892 647 900 650 901 642" stroke="#111" stroke-width="2" />
        </g>
        <circle cx="381" cy="565" r="3.500" fill="#eee" stroke="#333" stroke-width="1.300" />
        <circle cx="948" cy="648" r="3.500" fill="#eee" stroke="#333" stroke-width="1.300" />
        <rect x="387" y="173" width="27" height="2" fill="url(#ax-x)" />
        <path d="M379 183v25" stroke="#777" stroke-width="1.500" />
        <path d="M370 174 374.500 166.500h8.500L387 174 383 181.500h-8.500Z" fill="#050505" stroke="#aaa" stroke-width="1.500" />
      </svg>

      <aside class="trees">
        <ul class="tree">
          <li class="row root">
            <span class="vis three"><i /><svg class="s16"><use href="#i-eye-mix" /></svg><i /></span>
            <span class="stem"><i class="caret blue" /></span>
            <svg class="s16 node"><use href="#i-doc" /></svg><strong>Wash*</strong>
          </li>
          <li v-for="b in bodies" :key="b.label" class="row">
            <span class="vis three">
              <svg v-if="b.pick" class="s16"><use :href="'#i-' + b.pick" /></svg><i v-else />
              <svg class="s16"><use :href="'#i-' + b.eye" /></svg>
              <i :class="{ hue: b.wheel }" />
            </span>
            <span class="branch" :class="{ open: b.expand }"><svg v-if="b.expand" class="twisty" viewBox="0 0 8 12"><path d="M1 1 7 6 1 11Z" fill="none" stroke="#ddd" stroke-width="1.200" /></svg></span>
            <svg class="s16 node"><use :href="'#i-' + b.icon" /></svg><span>{{ b.label }}</span>
          </li>
        </ul>
        <ul class="tree">
          <li class="row root">
            <span class="vis"><i /></span>
            <span class="stem"><i class="caret blue" /></span>
            <svg class="s16 node"><use href="#i-atom-green" /></svg><span>Physics</span>
          </li>
          <li v-for="(p, n) in physics" :key="p.label" class="row">
            <span class="vis"><svg v-if="p.pick" class="s16"><use :href="'#i-' + p.pick" /></svg><i v-else /></span>
            <span class="branch" />
            <svg class="s16 node"><use :href="'#i-' + p.icon" /></svg>
            <label v-if="p.value !== undefined" :for="'value-' + n">{{ p.label }}</label><span v-else>{{ p.label }}</span>
            <input v-if="p.value !== undefined" :id="'value-' + n" v-model="p.value" :class="p.icon" type="text" />
          </li>
        </ul>
      </aside>

      <div class="capture">
        <button class="plain" aria-label="Show captures"><i class="back" /></button>
        <button class="plain" aria-label="Capture scene"><svg class="s28"><use href="#i-scene-add" /></svg></button>
      </div>

      <section class="monitors">
        <button class="plain toggle" aria-label="Monitors"><svg class="chart"><use href="#i-monitor" /></svg><i class="caret" /></button>
        <dl>
          <div><svg class="s16"><use href="#i-monitor" /></svg><dt>Pressure Drop</dt><dd>2.1982e5 Pa</dd>
            <svg class="s16" viewBox="0 0 16 16"><path d="M2 2h12L8 14Z" fill="none" stroke="#2c2c2c" stroke-width="1.200" /></svg>
            <svg class="s16 last" viewBox="0 0 16 16"><path d="M0 15h16L8 1Z" fill="#c3282c" /></svg></div>
          <div><svg class="s16"><use href="#i-monitor" /></svg><dt>Max. Velocity</dt><dd>15.612 m/s</dd>
            <svg class="s16" viewBox="0 0 16 16"><path d="M0 3h16L8 13Z" fill="#fff" /></svg></div>
        </dl>
      </section>

      <section class="legend">
        <div class="what"><span>Velocity</span><button class="plain" aria-label="More"><svg class="dots" viewBox="0 0 4 16"><path d="M0 1h4v3H0zM0 7h4v3H0zM0 13h4v3H0z" fill="#fff" /></svg></button>
          <select v-model="unit" aria-label="Unit"><option>m/s</option></select><i class="caret" /></div>
        <div class="parts"><button class="plain">X</button><button class="plain">Y</button><button class="plain">Z</button><button class="plain on">Magnitude</button></div>
        <div class="scale">
          <ol><li v-for="l in legend" :key="l.value" :class="{ end: l.end }">{{ l.value }}</li></ol>
          <div class="ramp" />
        </div>
        <button class="plain settings" aria-label="Legend settings">
          <svg class="s14" viewBox="0 0 14 14"><circle cx="7" cy="7" r="3.500" fill="none" stroke="#fff" stroke-width="3" /><circle cx="7" cy="7" r="5.800" fill="none" stroke="#fff" stroke-width="2" stroke-dasharray="2.400 2.155" /></svg>
        </button>
      </section>

      <div class="wheel left">
        <i class="hub" />
        <svg class="triad" viewBox="0 0 64 64">
          <path d="M22 2 25 6 28 2M25 6v4" stroke="#19b828" stroke-width="1.800" fill="none" />
          <path d="M25 12 28 22H22ZM25 22v10" fill="#16e02c" stroke="#16e02c" />
          <path d="M13 34 29 32 37 34V51L27 54 13 51Z" fill="#c7d3dd" /><path d="M27 35v19M13 34l14 1 10-1" stroke="#8ea1b1" fill="none" />
          <circle cx="19" cy="43" r="5" fill="#e01414" /><ellipse cx="33" cy="43" rx="3" ry="5" fill="#3c9ae0" />
          <path d="M39 43h4M42 40 51 43 42 46Z" fill="#2f7cc0" stroke="#2f7cc0" /><path d="M57 40h6l-5 7h6" fill="none" stroke="#2f7cc0" stroke-width="1.800" />
        </svg>
        <button v-for="v in viewTools" :key="v.icon" class="plain" :aria-label="v.label" :style="{ left: v.x + 'px', top: v.y + 'px' }">
          <svg :width="v.w" :height="v.h"><use :href="'#i-' + v.icon" /></svg>
        </button>
      </div>

      <div class="wheel right">
        <i class="ring" />
        <svg class="arc" viewBox="0 0 196 196"><path d="M68 8Q92 1 112 5" fill="none" stroke="#2f86cf" stroke-width="4" /></svg>
        <button class="plain power" aria-label="Stop solver"><svg viewBox="0 0 24 24"><path d="M7.500 4.800a8.500 8.500 0 1 0 9 0M12 1v10" fill="none" stroke="#e8f6e8" stroke-width="1.500" /></svg></button>
        <button v-for="v in resultTools" :key="v.icon" class="plain" :aria-label="v.label" :style="{ left: v.x + 'px', top: v.y + 'px' }">
          <svg :width="v.w" :height="v.h"><use :href="'#i-' + v.icon" /></svg>
        </button>
      </div>

      <section class="stage">
        <button class="plain" aria-label="Show simulations"><i class="caret up" /></button>
        <p>Simulation 1</p>
        <div class="cells">
          <div class="pair">
            <button class="plain hex" aria-label="Messages"><svg viewBox="0 0 32 22"><path d="M16 1c18 0 19 12 13 15l1 4-6-2C10 21 1 16 1 10 1 5 7 1 16 1Z" fill="none" stroke="#fff" stroke-width="1.300" /></svg><span>1</span></button>
            <button class="plain hex" aria-label="Collapse"><i class="dash" /></button>
          </div>
          <button class="plain bighex" aria-label="Fluid flow simulation"><span><svg class="flow"><use href="#i-fluid" /></svg></span></button>
        </div>
        <div class="mode">
          <button class="plain prev" aria-label="Explore"><svg viewBox="0 0 10 18"><path d="M9 1 1 9l8 8" fill="none" stroke="#fff" stroke-width="1.500" /></svg></button>
          <button class="plain refine">Refine</button>
        </div>
      </section>

      <footer class="status">
        <button class="plain" aria-label="Previous"><svg class="hop"><use href="#i-arrow-sw" /></svg></button>
        <button class="plain dim" aria-label="Next"><svg class="hop flip"><use href="#i-arrow-sw" /></svg></button>
        <i class="tick" />
        <p>Click an object. Double-click to select an edge loop. Triple-click to select a solid.</p>
        <div class="select">
          <i class="tick" />
          <i class="tick second" />
          <button class="plain advanced">Advanced Selection<i class="caret up" /></button>
          <i class="tick" />
          <span class="updown">
            <button class="plain dim" aria-label="Up"><i class="caret up large" /></button>
            <button class="plain dim" aria-label="Down"><i class="caret large" /></button>
          </span>
          <i class="tick" />
          <button class="plain pale" aria-label="Select"><svg class="ptr"><use href="#i-cursor" /></svg></button>
          <button class="plain" aria-label="Select options"><i class="caret up" /></button>
          <button class="plain" aria-label="Rotate select"><svg class="ptr"><use href="#i-cursor" /></svg><svg class="turn" viewBox="0 0 8 10"><path d="M1 1c5-1 7 2 6 4S4 8 1 8" fill="none" stroke="#7b9a3a" stroke-width="1.600" /></svg></button>
          <i class="tick" />
        </div>
      </footer>
    </main>
    <div class="base" />
  </div>
</template>

<style>
body { margin: 0; background: #fff; }
</style>

<style scoped>
.app { display: flex; flex-direction: column; min-height: 100vh; margin-right: 20px; overflow: hidden; font: 12px/18px "Open Sans", "Noto Sans", sans-serif; color: #f2f2f2; }
.app * { box-sizing: border-box; }
.sprite { position: absolute; width: 0; height: 0; }
h1, h2, p, ul, ol, dl, dd { margin: 0; padding: 0; list-style: none; }
svg { display: block; flex: none; }
.plain { display: flex; align-items: center; padding: 0; border: 0; background: none; color: inherit; font: inherit; white-space: nowrap; }
.plain:disabled { color: #555; }
.s14 { width: 14px; height: 14px; }
.s16 { width: 16px; height: 16px; }
.s17 { width: 17px; height: 17px; }
.s24 { width: 24px; height: 24px; }
.s26 { width: 26px; height: 26px; }
.s28 { width: 28px; height: 28px; }
.s32 { width: 36px; height: 32px; }
.caret { flex: none; width: 10px; height: 6px; background: currentColor; clip-path: polygon(0 0, 100% 0, 50% 100%); }
.caret.up { clip-path: polygon(50% 0, 100% 100%, 0 100%); }
.caret.large { width: 12px; height: 7px; }

.titlebar { display: grid; grid-template-columns: 1fr auto 1fr; align-items: center; height: 28px; background: #1b2f8f; }
.quick { display: flex; align-items: center; gap: 5px; padding-left: 2px; }
.quick .undo { margin-top: -2px; }
.logo { width: 24px; height: 26px; margin-right: 8px; }
.undo { width: 16px; height: 10px; }
.faded { color: #6f7fc4; }
.faded .undo { margin-left: 3px; }
h1 { font: bold 14px/20px "DejaVu Sans", sans-serif; color: #dfe6fb; }
.window { display: flex; justify-content: flex-end; align-items: center; gap: 12px; padding-right: 6px; }
.window em { font-size: 14px; color: #8fc8c0; margin-right: -1px; }
.help { margin-right: 12px; }
.minus { width: 14px; height: 3px; margin-top: 8px; background: #fff; }

.tabbar { display: flex; align-items: flex-end; height: 28px; background: #1b2f8f; }
.menu { width: 31px; height: 28px; padding-left: 6px; }
.tab { height: 25px; margin-right: -2px; filter: drop-shadow(0 0 1px #0b1650); }
.shape { display: flex; align-items: center; gap: 4px; height: 25px; padding: 0 17px 0 20px; background: #2848dc; clip-path: polygon(10px 0, calc(100% - 11px) 0, 100% 100%, 0 100%); font-size: 14px; font-weight: 500; font-variant: small-caps; }
.active { filter: none; }
.active .shape { padding-right: 25px; background: #000; }
.account { display: flex; align-items: center; gap: 12px; height: 28px; margin-left: auto; padding-right: 6px; }

.ribbon { display: flex; height: 107px; background: #000; }
.group { display: flex; flex-direction: column; border-right: 1px solid #4a4a4a; }
.group h2 { height: 26px; font-size: 14px; line-height: 18px; font-weight: 500; font-variant: small-caps; text-align: center; padding-top: 7px; }
.tools { display: flex; height: 81px; }
.w-quick { width: 215px; }
.w-physics { width: 566px; }
.w-results { width: 117px; }
.w-fidelity { width: 187px; }
.w-study { width: 148px; }
.w-display { width: 53px; }
.w-transfer { width: 131px; }
.big { flex: none; flex-direction: column; padding-top: 8px; }
.big span { margin-top: 5px; }
.big .caret { margin-top: 12px; }
.low span { margin-top: 17px; }
.mid { padding-top: 22px; }
.mid span { margin-top: 5px; }
.c-38 { width: 38px; }
.c-54 { width: 54px; }
.c-60 { width: 60px; }
.c-67 { width: 67px; }
.c-71 { width: 71px; }
.c-79 { width: 79px; }
.c-84 { width: 84px; }
.c-88 { width: 88px; }
.c-90 { width: 90px; }
.c-94 { width: 94px; }
.c-104 { width: 104px; }
.rule { width: 1px; height: 74px; margin-top: 7px; background: #4a4a4a; }
.stack { display: flex; flex-direction: column; padding: 2px 0 0 7px; }
.stack .line { flex: none; gap: 10px; height: 28px; }
.stack .far { margin-left: 5px; }
.stack.snug { padding-left: 2px; }
.stack.tall { flex: none; padding-left: 0; }
.c-104.stack.tall { padding-left: 6px; }
.tall .line { height: 36px; }
.tall .wide { gap: 11px; height: 40px; }

.viewport { position: relative; flex: 1; min-height: 890px; overflow: hidden; background: radial-gradient(ellipse 58% 115% at 50% 55%, #5d5d5d 0%, #565656 23%, #494949 42%, #3f3f3f 60%, #353535 80%, #313131 100%); }
.scene { position: absolute; inset: 0; width: 100%; height: 100%; }
.trees { position: absolute; top: 1px; left: 1px; display: flex; flex-direction: column; gap: 20px; color: #e4e4e4; text-shadow: 0 1px 1px #111; }
.row { display: flex; align-items: center; height: 26px; }
.vis { display: flex; width: 20px; align-items: center; }
.vis > * { width: 16px; height: 16px; margin: 0 2px; }
.vis.three { width: 60px; }
.hue { border-radius: 50%; background: radial-gradient(circle, #333 0 3px, transparent 4px), conic-gradient(#f6e02a, #38c838, #22b4e0, #3b3bf0, #d428d4, #f02a2a, #f6e02a); }
.stem { display: flex; justify-content: center; width: 20px; padding-right: 4px; }
.caret.blue { width: 12px; height: 7px; background: linear-gradient(#9fd2f6, #2b83c9); }
.branch { position: relative; width: 34px; height: 26px; }
.branch::before { content: ""; position: absolute; left: 7px; top: -9px; width: 23px; height: 22px; border: solid #a0a0a0; border-width: 0 0 2px 2px; }
.branch.open::before { width: 8px; }
.row:nth-child(n+3) .branch::before { top: -15px; height: 28px; }
.twisty { position: absolute; left: 19px; top: 7px; width: 8px; height: 12px; }
.node { margin-right: 6px; }
strong { font-weight: 700; color: #dd621a; }
.row input { height: 24px; margin-left: 7px; padding: 0 7px; border: 1px solid #2f4c5c; background: transparent; color: inherit; font: inherit; }
.row input.inlet { width: 70px; }
.row input.outlet { width: 57px; }

.capture { position: absolute; top: 2px; right: 264px; display: flex; gap: 4px; }
.back { width: 10px; height: 16px; background: #fff; clip-path: polygon(0 50%, 100% 0, 100% 100%); }
.monitors { position: absolute; top: 0; right: 0; display: flex; flex-direction: column; align-items: flex-end; }
.toggle { flex-direction: column; width: 32px; height: 32px; padding-top: 2px; background: #2070ae; }
.chart { width: 28px; height: 23px; }
.monitors dl { width: 252px; background: #000; }
.monitors dl div { display: flex; align-items: center; height: 26px; padding: 2px 0 0 21px; color: #e2e2e2; }
.monitors dt { margin: 0 12px 0 9px; }
.monitors dd { margin-right: 6px; }
.monitors .last { margin-left: 4px; }

.legend { position: absolute; top: 303px; right: 0; display: flex; flex-direction: column; width: 154px; padding: 8px 16px 6px 10px; background: #303030; }
.what { display: flex; align-items: center; height: 20px; padding: 0 3px 0 11px; }
.dots { width: 3px; height: 13px; margin-left: 10px; }
.what select { width: 28px; margin-left: auto; padding: 0; border: 0; appearance: none; background: none; color: inherit; font: inherit; }
.parts { display: flex; margin-top: 3px; height: 20px; }
.parts .plain { justify-content: center; align-items: flex-end; width: 18px; height: 20px; border-bottom: 1px solid #2f8de0; line-height: 17px; }
.parts .on { flex: 1; padding-right: 5px; border-bottom-width: 3px; color: #3b93dc; line-height: 15px; }
.scale { display: flex; justify-content: flex-end; gap: 1px; height: 291px; margin-top: 5px; }
.scale ol { display: flex; flex-direction: column; justify-content: space-between; align-items: flex-end; }
.scale li { padding: 0 4px; line-height: 21px; background: #141414; color: #b8b8b8; }
.scale .end { background: #000; color: #f2f2f2; }
.ramp { width: 32px; margin: 10px 0; border: solid #f0e0e8; border-width: 1px 0; background: linear-gradient(#d6a0a8, #f0c4b0 8%, #fdd8b8 15%, #fde4ba 26%, #fbfcb4 37%, #9ed69c 50%, #b6fff8 62%, #bbe8ff 74%, #bcd2fb 86%, #c8c0fb); }
.settings { align-self: flex-end; justify-content: center; width: 32px; height: 30px; margin-top: -9px; background: #000; }

.wheel { position: absolute; bottom: -22px; width: 196px; height: 196px; border-radius: 50%; background: #030303; }
.wheel .plain { position: absolute; transform: translate(-50%, -50%); }
.wheel.left { left: -44px; }
.wheel.right { right: -44px; }
.hub, .ring { position: absolute; inset: 40px; border-radius: 50%; background: #303030; }
.ring { background: none; border: 3px solid #333; }
.triad { position: absolute; left: 72px; top: 56px; width: 64px; height: 64px; }
.arc { position: absolute; inset: 0; }
.wheel .power { left: 98px; top: 98px; justify-content: center; width: 46px; height: 46px; border: 6px solid #3a3942; border-radius: 50%; background: #098a12; }
.power svg { width: 22px; height: 22px; }

.stage { position: absolute; bottom: 22px; left: 50%; transform: translateX(-50%); display: flex; flex-direction: column; align-items: center; width: 230px; }
.stage .caret { width: 12px; height: 7px; }
.stage p { margin: 7px 0 8px; line-height: 18px; color: #ccc; text-shadow: 0 1px 1px #111; }
.cells { display: flex; align-items: center; margin-right: 34px; }
.pair { margin-right: -10px; }
.hex { position: relative; justify-content: center; width: 44px; height: 39px; background: #050505; clip-path: polygon(24% 0, 76% 0, 100% 50%, 76% 100%, 24% 100%, 0 50%); }
.hex svg { width: 32px; height: 22px; }
.hex span { position: absolute; }
.dash { width: 25px; height: 3px; background: #fff; }
.bighex { position: relative; width: 88px; height: 78px; padding: 3px; background: #6f6920; clip-path: polygon(25% 0, 75% 0, 100% 50%, 75% 100%, 25% 100%, 0 50%); }
.bighex span { display: flex; align-items: center; justify-content: center; width: 100%; height: 100%; background: #0a0a0a; clip-path: polygon(25% 0, 75% 0, 100% 50%, 75% 100%, 25% 100%, 0 50%); }
.flow { width: 42px; height: 26px; }
.mode { display: flex; margin: 16px 36px 0 0; }
.prev { width: 45px; height: 24px; padding-left: 20px; background: #050505; clip-path: polygon(22% 0, 100% 0, 78% 100%, 0 100%); }
.prev svg { width: 10px; height: 18px; }
.refine { position: relative; justify-content: center; width: 156px; height: 24px; padding-top: 1px; margin-left: -9px; background: #9b30d0; clip-path: polygon(10px 0, calc(100% - 10px) 0, 100% 100%, 0 100%); font-size: 18px; font-weight: 500; font-variant: small-caps; color: #fff; }
.refine::before { content: ""; position: absolute; top: 0; left: 50%; width: 10px; height: 5px; margin-left: -4px; background: #5f1f84; clip-path: polygon(0 0, 100% 0, 50% 100%); }

.status { position: absolute; inset: auto 0 0; display: flex; align-items: center; height: 20px; padding: 4px 0 0 11px; background: linear-gradient(transparent, #000 80%); color: #fff; }
.status p { line-height: 16px; margin-left: 8px; }
.hop { width: 13px; height: 9px; margin-right: 10px; }
.flip { transform: rotate(180deg); }
.dim { color: #777; }
.tick { width: 1px; height: 14px; background: #444; }
.select { display: flex; align-items: center; gap: 8px; margin-left: auto; margin-right: 159px; }
.second { margin-left: 126px; }
.advanced { gap: 28px; margin: 0 -3px 0 21px; line-height: 16px; }
.updown { display: flex; gap: 12px; }
.ptr { width: 10px; height: 13px; }
.pale { color: #b9d0a4; }
.turn { width: 7px; height: 9px; margin-left: -2px; }
.base { height: 20px; background: #1b2f8f; }
</style>
